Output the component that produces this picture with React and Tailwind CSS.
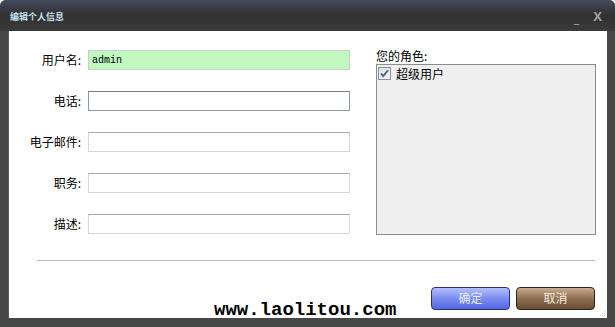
import React from "react";

const FIELDS = [
  { label: "用户名", value: "admin", green: true },
  { label: "电话", value: "", focus: true },
  { label: "电子邮件", value: "" },
  { label: "职务", value: "" },
  { label: "描述", value: "" },
];

const cjk = { fontFamily: '"Noto Sans CJK SC", "Liberation Sans", sans-serif' };

const CheckMark = () => (
  <svg width="13" height="13" viewBox="0 0 13 13" className="shrink-0">
    <defs>
      <linearGradient id="cbg" x1="0" y1="0" x2="1" y2="1">
        <stop offset="0" stopColor="#dcdfe6" />
        <stop offset="1" stopColor="#f6f6f8" />
      </linearGradient>
    </defs>
    <rect x="0.5" y="0.5" width="12" height="12" fill="url(#cbg)" stroke="#8a90a0" />
    <path d="M3 6.5 L5.2 9 L10 3.2" fill="none" stroke="#4a5a78" strokeWidth="1.8" />
  </svg>
);

const Grip = () => (
  <svg width="6" height="6" viewBox="0 0 6 6" className="absolute right-[1px] bottom-[1px]">
    <rect x="4" y="0" width="1" height="1" fill="#cfcfcf" />
    <rect x="2" y="2" width="1" height="1" fill="#cfcfcf" />
    <rect x="4" y="2" width="1" height="1" fill="#cfcfcf" />
    <rect x="0" y="4" width="1" height="1" fill="#cfcfcf" />
    <rect x="2" y="4" width="1" height="1" fill="#cfcfcf" />
    <rect x="4" y="4" width="1" height="1" fill="#cfcfcf" />
  </svg>
);

export default function App() {
  return (
    <div
      className="w-[615px] h-[327px] flex flex-col bg-[#474747] rounded-t-[6px] overflow-hidden"
      style={cjk}
    >
      {/* title bar */}
      <div className="h-[31px] shrink-0 flex items-center bg-gradient-to-b from-[#454a5c] via-[#313131] to-[#3a3a3a] px-[10px]">
        <span className="text-[9px] font-bold text-[#c6e2f0] leading-none mt-[2px]">编辑个人信息</span>
        <span className="ml-auto text-[#9a9a9a] text-[10px] font-bold leading-none mt-[6px] mr-[14px]">_</span>
        <span className="text-[#a8a8a8] text-[13px] font-bold leading-none mt-[2px] mr-[3px]" style={{ fontFamily: '"Liberation Sans", sans-serif' }}>
          X
        </span>
      </div>

      {/* body */}
      <div className="flex-1 px-[8px] pb-[9px] flex">
        <div className="relative flex-1 bg-white border-l border-[#5e5e5e] flex flex-col">
          <div className="flex pt-[19px]">
            {/* form */}
            <div className="flex flex-col gap-[21px]">
              {FIELDS.map((f) => (
                <div key={f.label} className="flex items-center h-[20px]">
                  <span className="w-[74px] text-right text-[12px] text-black pr-[2px]">
                    {f.label}:
                  </span>
                  <div
                    className={`ml-[5px] w-[262px] h-[20px] border flex items-center px-[3px] ${
                      f.green
                        ? "bg-[#c0f8c0] border-[#c8d0c8]"
                        : f.focus
                          ? "bg-white border-[#8a9aaa] border-t-[#6f8090]"
                          : "bg-white border-[#d6d6d6] border-t-[#a8a8a8]"
                    }`}
                  >
                    <span className="text-[10px] text-black" style={{ fontFamily: '"Liberation Mono", monospace' }}>
                      {f.value}
                    </span>
                  </div>
                </div>
              ))}
            </div>

            {/* roles */}
            <div className="ml-[26px] w-[220px] flex flex-col">
              <span className="text-[12px] text-black leading-[14px] -mt-[1px]">您的角色:</span>
              <div className="mt-[1px] h-[171px] bg-[#efefef] border border-[#8c8c8c] px-[1px] py-[2px]">
                <div className="flex items-center gap-[5px]">
                  <CheckMark />
                  <span className="text-[12px] text-black leading-none">超级用户</span>
                </div>
              </div>
            </div>
          </div>

          <div className="mt-[25px] ml-[28px] mr-[12px] h-[1px] bg-[#bdbdbd]" />

          {/* bottom row */}
          <div className="flex items-end mt-[26px] mr-[12px]">
            <span
              className="ml-[205px] text-[19px] font-bold text-black leading-none mb-[-10px]"
              style={{ fontFamily: '"Liberation Mono", monospace' }}
            >
              www.laolitou.com
            </span>
            <button className="ml-auto w-[79px] h-[23px] rounded-[4px] border border-[#27307e] bg-gradient-to-b from-[#b3bef8] via-[#7c8cf0] to-[#5466e2] text-[12px] text-[#e8ecff] leading-none pb-[2px]">
              确定
            </button>
            <button className="ml-[6px] w-[79px] h-[23px] rounded-[4px] border border-[#2e241a] bg-gradient-to-b from-[#c8ad92] via-[#8e6f50] to-[#6a4e33] text-[12px] text-[#f2ece4] leading-none pb-[2px]">
              取消
            </button>
          </div>
          <Grip />
        </div>
      </div>
    </div>
  );
}
